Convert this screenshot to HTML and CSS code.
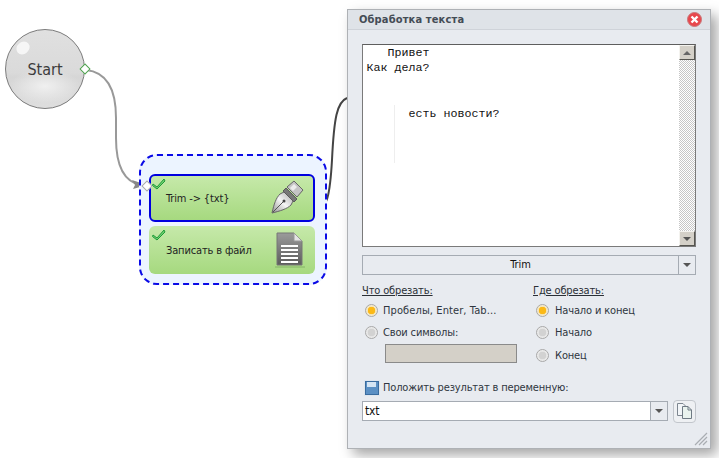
FILE: index.html
```html
<!DOCTYPE html>
<html lang="en">
<head>
  <meta charset="UTF-8">
  <title>Обработка текста</title>
  <link rel="stylesheet" href="styles.css">
</head>
<body>

<div class="canvas">
  <svg class="wires" width="719" height="458">
    <path d="M86 70 C106 72 116 88 116 118 V138 C116 165 124 182 141 185" fill="none" stroke="#999" stroke-width="2"/>
    <path d="M147 185 L132 180 L135 185 L133 189 Z" fill="#888"/>
    <path d="M316 212 C327 209 330 195 332 160 C334 118 337 102 347 98" fill="none" stroke="#444" stroke-width="2"/>
  </svg>

  <div class="start-node">
    <span class="start-shine"></span>
    <span class="start-label">Start</span>
  </div>
  <span class="port port-out"></span>

  <div class="group">
    <div class="node node-selected">
      <span class="node-label">Trim -&gt; {txt}</span>
      <svg class="node-icon" width="36" height="36" viewBox="0 0 36 36">
        <defs>
          <linearGradient id="nib" x1="0" y1="1" x2="1" y2="0">
            <stop offset="0" stop-color="#8f8f8f"/>
            <stop offset="0.5" stop-color="#f6f6f6"/>
            <stop offset="1" stop-color="#a8a8a8"/>
          </linearGradient>
        </defs>
        <path d="M3 33 C5 24 7 18 11 14 L15 12 L24 21 L22 25 C18 29 11 31 3 33 Z" fill="url(#nib)" stroke="#666"/>
        <path d="M4 32 L14 22" stroke="#555"/>
        <circle cx="15" cy="21" r="1.5" fill="#444"/>
        <path d="M14 11 L17 8 L28 19 L25 22 Z" fill="#777" stroke="#5a5a5a"/>
        <path d="M18 7 L25 1 L34 10 L28 17 Z" fill="#c4c4c4" stroke="#666"/>
        <path d="M21 8 L25 4 L28 7 L24 11 Z" fill="#ececec"/>
      </svg>
    </div>
    <div class="node">
      <span class="node-label">Записать в файл</span>
      <svg class="node-icon doc-icon" width="30" height="36" viewBox="0 0 30 36">
        <defs>
          <linearGradient id="page" x1="0" y1="0" x2="0" y2="1">
            <stop offset="0" stop-color="#9b9b9b"/>
            <stop offset="1" stop-color="#5c5c5c"/>
          </linearGradient>
        </defs>
        <path d="M2 1 H19 L27 9 V33 H2 Z" fill="url(#page)" stroke="#777"/>
        <path d="M19 1 V9 H27 Z" fill="#e4e4e4" stroke="#999"/>
        <path d="M6 14 H23 M6 18 H23 M6 22 H23 M6 26 H23 M6 30 H23" stroke="#fff" stroke-width="2"/>
        <path d="M0 35 H30" stroke="#6d9a55" opacity="0.6"/>
      </svg>
    </div>
  </div>

  <span class="port port-in"></span>
  <svg class="check check-1" width="14" height="12" viewBox="0 0 14 12"><path d="M1 6 L5 9 L12 1 L13 3 L5 11 L0.5 7.5 Z" fill="#6fd06f" stroke="#1f9a3a"/></svg>
  <svg class="check check-2" width="14" height="12" viewBox="0 0 14 12"><path d="M1 6 L5 9 L12 1 L13 3 L5 11 L0.5 7.5 Z" fill="#6fd06f" stroke="#1f9a3a"/></svg>

  <div class="dialog">
    <div class="dialog-title">
      <span>Обработка текста</span>
      <svg class="close-btn" width="15" height="15" viewBox="0 0 15 15">
        <circle cx="7.5" cy="7.5" r="7" fill="#e8474c" stroke="#c9797b"/>
        <path d="M4.5 4.5 L10.5 10.5 M10.5 4.5 L4.5 10.5" stroke="#fff" stroke-width="2.4"/>
      </svg>
    </div>

    <div class="dialog-body">
      <div class="editor">
        <span class="guide"></span>
<pre class="editor-text">   Привет
Как дела?


      есть новости?</pre>
        <div class="scrollbar">
          <span class="scroll-btn"><i class="tri tri-up"></i></span>
          <span class="scroll-track"></span>
          <span class="scroll-btn"><i class="tri tri-down"></i></span>
        </div>
      </div>

      <div class="combo combo-trim">
        <span class="combo-value">Trim</span>
        <span class="combo-arrow"><i class="tri tri-down"></i></span>
      </div>

      <div class="options">
        <div class="option-col">
          <div class="option-title">Что обрезать:</div>
          <div class="radio radio-wide"><span class="radio-dot radio-on"></span>Пробелы, Enter, Tab...</div>
          <div class="radio"><span class="radio-dot"></span>Свои символы:</div>
          <div class="symbols"></div>
        </div>
        <div class="option-col">
          <div class="option-title">Где обрезать:</div>
          <div class="radio"><span class="radio-dot radio-on"></span>Начало и конец</div>
          <div class="radio"><span class="radio-dot"></span>Начало</div>
          <div class="radio"><span class="radio-dot"></span>Конец</div>
        </div>
      </div>

      <div class="save-row">
        <svg width="16" height="16" viewBox="0 0 16 16">
          <rect x="0.5" y="0.5" width="15" height="15" fill="#fff" stroke="#dfe6ee"/>
          <rect x="1.5" y="1.5" width="13" height="13" fill="#5b90c4" stroke="#3a6c9f"/>
          <rect x="3" y="2" width="9" height="5" fill="#d5e5f4"/>
        </svg>
        <span>Положить результат в переменную:</span>
      </div>

      <div class="var-row">
        <div class="combo combo-var">
          <span class="var-value">txt</span>
          <span class="combo-arrow"><i class="tri tri-down"></i></span>
        </div>
        <span class="copy-btn">
          <svg width="17" height="18" viewBox="0 0 17 18">
            <path d="M1.5 1.5 H7 L10 4.5 V13.5 H1.5 Z" fill="#f2f5f8" stroke="#7d8690"/>
            <path d="M6.5 4.5 H12 L15.5 8 V16.5 H6.5 Z" fill="#eaf3ef" stroke="#6f7a84"/>
            <path d="M12 4.5 V8 H15.5" fill="none" stroke="#6f7a84"/>
          </svg>
        </span>
      </div>
    </div>

    <svg class="grip" width="14" height="14" viewBox="0 0 14 14">
      <path d="M1 13 L13 1 M5 13 L13 5 M9 13 L13 9" stroke="#a9adb2" stroke-width="1.2"/>
    </svg>
  </div>
</div>

</body>
</html>
```

FILE: styles.css
```css
html, body {
  margin: 0;
  background: #fff;
}
body {
  font-family: 'DejaVu Sans', sans-serif;
  font-stretch: condensed;
  font-size: 11px;
  letter-spacing: -0.15px;
  color: #222;
  overflow: hidden;
}
.canvas {
  position: relative;
  width: 719px;
  height: 458px;
  overflow: hidden;
}
.wires {
  position: absolute;
  left: 0;
  top: 0;
}

/* start node */
.start-node {
  position: absolute;
  left: 5px;
  top: 29px;
  width: 80px;
  height: 80px;
  box-sizing: border-box;
  border: 1px solid #7b7b7b;
  border-radius: 50%;
  background: radial-gradient(ellipse 45% 22% at 50% 72%, #f0f0f0, rgba(240,240,240,0)),
              linear-gradient(#e0e0e0 0, #dadada 55%, #d6d6d6 60%, #dedede 100%);
  display: flex;
  align-items: center;
  justify-content: center;
}
.start-shine {
  position: absolute;
  left: 10px;
  top: 12px;
  width: 14px;
  height: 12px;
  border-radius: 50%;
  background: #f6f6f6;
  transform: rotate(-40deg);
}
.start-label {
  font-size: 16px;
  letter-spacing: 0;
  color: #3c3c3c;
  position: relative;
}
.port {
  position: absolute;
  width: 6px;
  height: 6px;
  background: #fff;
  transform: rotate(45deg);
}
.port-out {
  left: 81px;
  top: 65px;
  border: 1px solid #4ea24e;
}
.port-in {
  left: 143px;
  top: 182px;
  border: 1px solid #aaa;
}
.check {
  position: absolute;
  left: 152px;
}
.check-1 {
  top: 178px;
}
.check-2 {
  top: 229px;
}

/* group */
.group {
  position: absolute;
  left: 139px;
  top: 154px;
  width: 188px;
  height: 131px;
  box-sizing: border-box;
  border: 2px dashed #0a0ae6;
  border-radius: 18px;
  background: #ecf4ff;
  padding: 18px 10px 0 8px;
  display: flex;
  flex-direction: column;
  gap: 4px;
}
.node {
  height: 48px;
  box-sizing: border-box;
  border-radius: 6px;
  background: linear-gradient(#c6e9aa, #a6d97f);
  display: flex;
  align-items: center;
  justify-content: space-between;
  padding: 0 11px 0 17px;
  color: #222;
}
.node-selected {
  border: 2px solid #0000e0;
  padding: 0 8px 0 15px;
}
.node-icon {
  display: block;
}
.doc-icon {
  margin-right: -1px;
}

/* dialog */
.dialog {
  position: absolute;
  left: 347px;
  top: 9px;
  width: 364px;
  height: 440px;
  box-sizing: border-box;
  border: 1px solid #aeb1b5;
  background: #e8ebf0;
  box-shadow: 6px 6px 12px rgba(0,0,0,0.35);
}
.dialog-title {
  height: 19px;
  background: #dfe3e8;
  border-bottom: 1px solid #cfd3d9;
  display: flex;
  align-items: center;
  justify-content: space-between;
  padding: 0 9px 0 11px;
  font-weight: bold;
  font-size: 11px;
  letter-spacing: 0.15px;
  color: #444c55;
}
.close-btn {
  display: block;
  margin-right: -1px;
}
.dialog-body {
  padding: 14px 14px 0;
}

.editor {
  position: relative;
  height: 203px;
  box-sizing: border-box;
  border: 1px solid #7a7a7a;
  border-top-color: #5e5e5e;
  background: #fff;
  display: flex;
  justify-content: space-between;
}
.editor-text {
  margin: 0;
  padding: 1px 0 0 3.5px;
  font-family: 'Liberation Mono', monospace;
  font-size: 11.67px;
  line-height: 15.25px;
  letter-spacing: 0;
  color: #111;
}
.guide {
  position: absolute;
  left: 31px;
  top: 60px;
  height: 58px;
  border-left: 1px solid #eee;
}
.scrollbar {
  width: 16px;
  display: flex;
  flex-direction: column;
}
.scroll-btn {
  height: 15px;
  box-sizing: border-box;
  background: #d4d0c8;
  border: 1px solid;
  border-color: #f4f3ef #55544f #55544f #f4f3ef;
  display: flex;
  align-items: center;
  justify-content: center;
}
.scroll-track {
  flex: 1;
  background: repeating-conic-gradient(#c6c6c6 0 25%, #fff 0 50%) 0 0 / 2px 2px;
}
.tri {
  display: block;
  width: 0;
  height: 0;
  border-left: 4px solid transparent;
  border-right: 4px solid transparent;
}
.tri-up {
  border-bottom: 4px solid #666;
}
.tri-down {
  border-top: 4px solid #555;
}

.combo {
  display: flex;
  box-sizing: border-box;
  border: 1px solid #a5abb3;
}
.combo-trim {
  height: 20px;
  margin-top: 8px;
  background: #e8ebf0;
}
.combo-value {
  flex: 1;
  text-align: center;
  line-height: 18px;
  color: #111;
}
.combo-arrow {
  width: 16px;
  border-left: 1px solid #a5abb3;
  background: #e8ebf0;
  display: flex;
  align-items: center;
  justify-content: center;
}

.options {
  display: grid;
  grid-template-columns: 172px 1fr;
  margin-top: 8px;
}
.option-title {
  text-decoration: underline;
  line-height: 15px;
  height: 16px;
  color: #2a2f36;
}
.option-col:last-child {
  margin-left: -1px;
}
.radio {
  display: flex;
  align-items: center;
  gap: 5px;
  height: 22.5px;
  color: #2f3640;
  margin-left: 3px;
}
.radio-wide {
  letter-spacing: 0.1px;
}
.option-col:last-child .radio {
  gap: 6px;
}
.radio-dot {
  width: 13px;
  height: 13px;
  box-sizing: border-box;
  border: 1px solid #a8a8a8;
  border-radius: 50%;
  background: radial-gradient(circle, #d2d2d2 0 3.5px, #e4e4e4 4px, #fafafa 100%);
}
.radio-on {
  background: radial-gradient(circle, #fbb917 0 3.5px, #f4e3b5 4px, #fafafa 100%);
}
.symbols {
  width: 132px;
  height: 19px;
  margin-left: 23px;
  box-sizing: border-box;
  border: 1px solid #8a8a8a;
  background: #d4d0c8;
}

.save-row {
  display: flex;
  align-items: center;
  gap: 3px;
  margin-top: 12px;
  margin-left: 2px;
  height: 18px;
  color: #2f3640;
}
.save-row svg {
  display: block;
}
.var-row {
  display: flex;
  align-items: center;
  justify-content: space-between;
  margin-top: 3px;
}
.combo-var {
  width: 306px;
  height: 20px;
  background: #fff;
}
.var-value {
  flex: 1;
  padding-left: 2px;
  line-height: 18px;
  font-size: 12px;
  color: #111;
}
.copy-btn {
  width: 23px;
  height: 23px;
  box-sizing: border-box;
  border: 1px solid #c2c6cc;
  border-radius: 4px;
  background: #eef0f3;
  display: flex;
  align-items: center;
  justify-content: center;
}
.grip {
  position: absolute;
  right: 2px;
  bottom: 2px;
}
```
